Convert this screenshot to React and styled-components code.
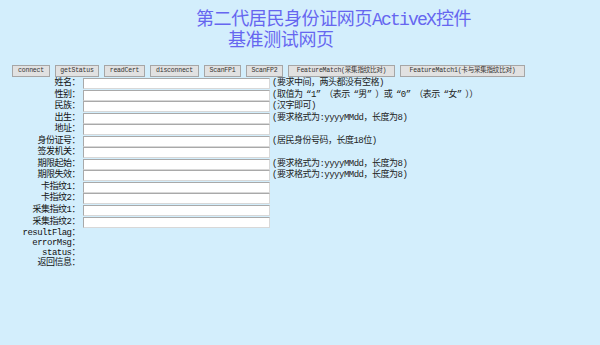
import React from "react";
import styled, { createGlobalStyle } from "styled-components";

const Global = createGlobalStyle`
  html, body { margin: 0; padding: 0; background: #d3eefc; }
  body { font-family: "Liberation Mono", "Noto Sans CJK SC", monospace; color: #111; }
`;

const Page = styled.div`
  width: 600px;
  height: 345px;
  overflow: hidden;
  background: #d3eefc;
`;

const Title = styled.h1`
  margin: 0;
  padding: 10px 0 0 196px;
  font-family: "Liberation Mono", "Noto Sans CJK SC", monospace;
  font-weight: normal;
  font-size: 18px;
  line-height: 21px;
  color: #6666f0;
  letter-spacing: -0.4px;
`;

const TitleLine = styled.div`
  padding-left: ${(p) => p.$indent || 0}px;
  white-space: nowrap;
`;

const Latin = styled.span`
  letter-spacing: -1.8px;
  margin-right: 1px;
`;

const Toolbar = styled.div`
  display: flex;
  gap: 5px;
  padding: 0 0 0 12px;
  margin-top: 13px;
`;

const Button = styled.button`
  width: ${(p) => p.$w}px;
  height: 12px;
  padding: 0;
  box-sizing: border-box;
  background: #e1e1e1;
  border: 1px solid #a6a6a6;
  border-radius: 0;
  font-family: "Liberation Mono", "Noto Sans CJK SC", monospace;
  font-size: 6.5px;
  line-height: 10px;
  color: #333;
  white-space: nowrap;
  letter-spacing: -0.2px;
`;

const Form = styled.div`
  display: grid;
  grid-template-columns: 83px 189px 1fr;
  grid-auto-rows: 11.55px;
  margin-top: 1px;
  font-size: 9px;
  letter-spacing: -0.5px;
`;

const Label = styled.div`
  text-align: right;
  padding-right: 3px;
  line-height: 11.5px;
  white-space: nowrap;
`;

const Field = styled.input`
  display: block;
  width: 187px;
  height: 11px;
  box-sizing: border-box;
  margin: 0;
  padding: 0 2px;
  background: #fff;
  border: 1px solid #a9a9a9;
  border-right-color: #d8d8d8;
  border-bottom-color: #d8d8d8;
  font-size: 8px;
  outline: none;
`;

const Note = styled.div`
  line-height: 11.5px;
  white-space: nowrap;
  color: #222;
  overflow: visible;
`;

const Wide = styled.span`
  display: inline-block;
  width: 8.5px;
  height: 11.5px;
  line-height: 11.5px;
  vertical-align: top;
  text-align: ${(p) => (p.$open ? "right" : "left")};
`;

const Result = styled.div`
  display: grid;
  grid-template-columns: 83px 1fr;
  grid-auto-rows: 9.8px;
  margin-top: 1px;
  font-size: 9px;
  letter-spacing: -0.5px;
`;

const ResultLabel = styled(Label)`
  line-height: 9.8px;
`;

const buttons = [
  ["connect", 38],
  ["getStatus", 44],
  ["readCert", 41],
  ["disconnect", 49],
  ["ScanFP1", 37],
  ["ScanFP2", 37],
  ["FeatureMatch(采集指纹比对)", 107],
  ["FeatureMatch1(卡与采集指纹比对)", 125],
];

const Q = ({ children }) => (
  <>
    <Wide $open>“</Wide>
    {children}
    <Wide>”</Wide>
  </>
);

const fields = [
  ["姓名：", "(要求中间，两头都没有空格)"],
  [
    "性别：",
    <>
      (取值为<Q>1</Q>（表示<Q>男</Q>）或<Q>0</Q>（表示<Q>女</Q>））
    </>,
  ],
  ["民族：", "(汉字即可)"],
  ["出生：", "(要求格式为:yyyyMMdd，长度为8)"],
  ["地址：", ""],
  ["身份证号：", "(居民身份号码，长度18位)"],
  ["签发机关：", ""],
  ["期限起始：", "(要求格式为:yyyyMMdd，长度为8)"],
  ["期限失效：", "(要求格式为:yyyyMMdd，长度为8)"],
  ["卡指纹1：", ""],
  ["卡指纹2：", ""],
  ["采集指纹1：", ""],
  ["采集指纹2：", ""],
];

const results = ["resultFlag：", "errorMsg：", "status：", "返回信息："];

export default function App() {
  return (
    <Page>
      <Global />
      <Title>
        <TitleLine>
          第二代居民身份证网页<Latin>ActiveX</Latin>控件
        </TitleLine>
        <TitleLine $indent={32}>基准测试网页</TitleLine>
      </Title>
      <Toolbar>
        {buttons.map(([t, w]) => (
          <Button key={t} $w={w}>
            {t}
          </Button>
        ))}
      </Toolbar>
      <Form>
        {fields.map(([l, n]) => (
          <React.Fragment key={l}>
            <Label>{l}</Label>
            <div>
              <Field type="text" />
            </div>
            <Note>{n}</Note>
          </React.Fragment>
        ))}
      </Form>
      <Result>
        {results.map((r) => (
          <React.Fragment key={r}>
            <ResultLabel>{r}</ResultLabel>
            <div />
          </React.Fragment>
        ))}
      </Result>
    </Page>
  );
}
